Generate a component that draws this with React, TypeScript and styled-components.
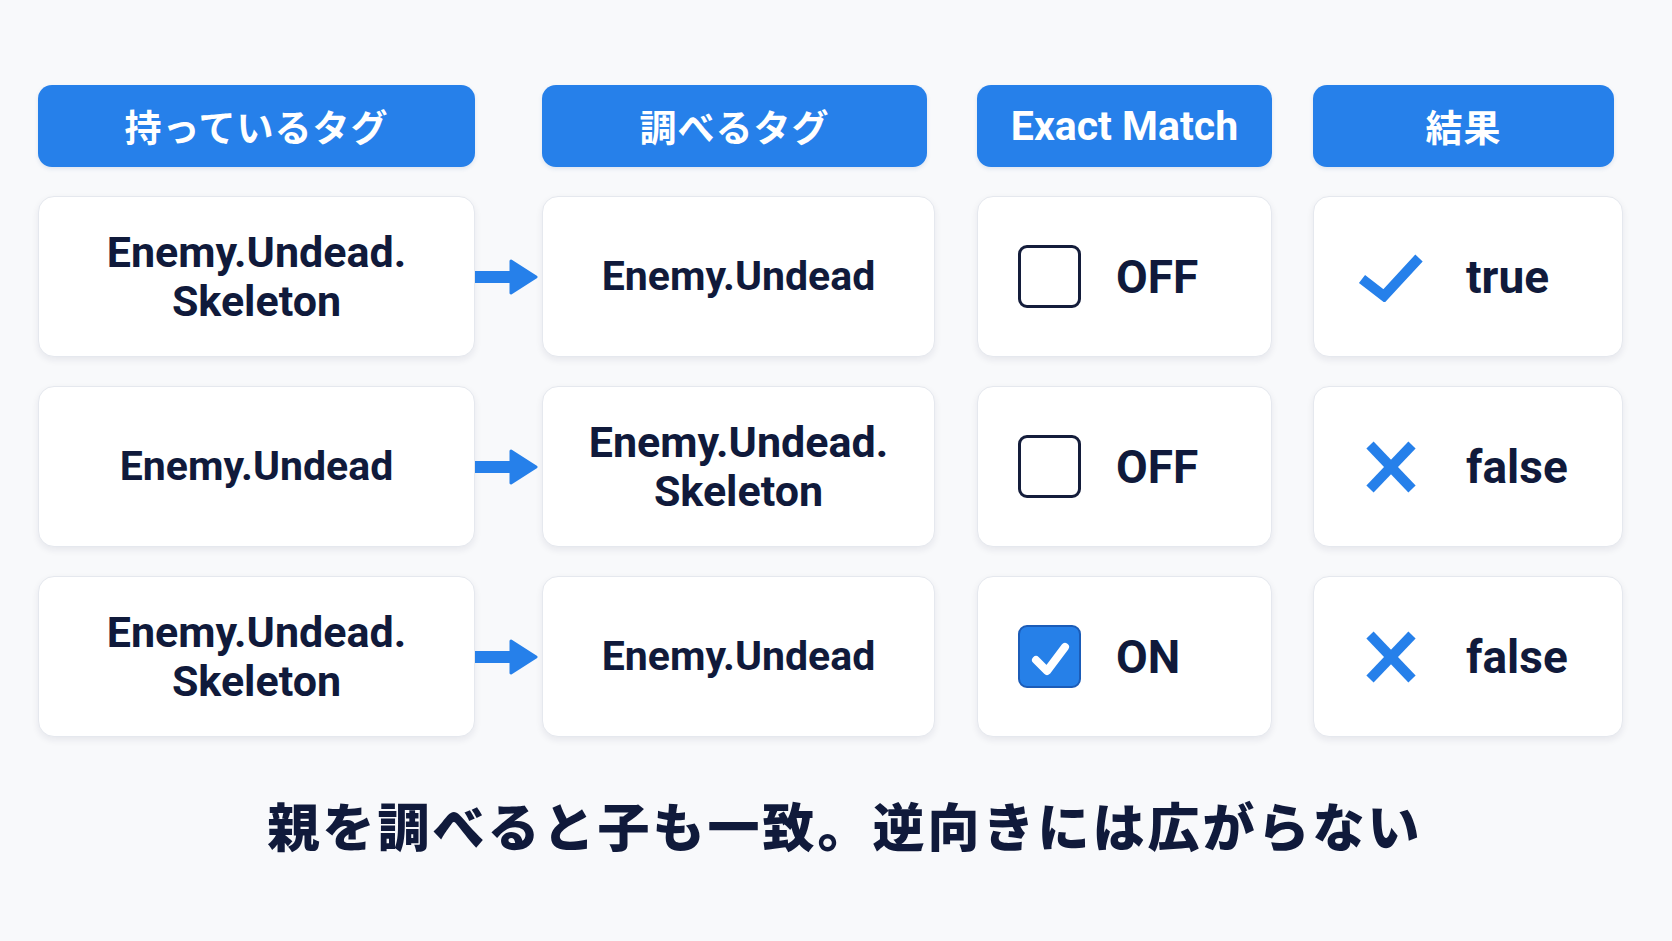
import React from "react";
import styled, { createGlobalStyle } from "styled-components";

const GlobalStyle = createGlobalStyle`
  html, body {
    margin: 0;
    padding: 0;
    background: #f8f9fb;
  }
  body {
    font-family: Roboto, "Noto Sans CJK JP", sans-serif;
    color: #101a3b;
  }
`;

const Page = styled.div`
  width: 1672px;
  height: 941px;
  box-sizing: border-box;
  padding: 85px 0 0 38px;
  display: flex;
  flex-direction: column;
`;

const Grid = styled.div`
  display: grid;
  grid-template-columns: 437px 67px 393px 42px 295px 41px 310px;
  grid-auto-rows: 161px;
  grid-template-rows: 82px;
  row-gap: 29px;
`;

const Header = styled.div<{ $col: number; $trim?: number }>`
  grid-column: ${(p) => p.$col};
  margin-right: ${(p) => p.$trim ?? 0}px;
  background: #2680ea;
  border-radius: 14px;
  box-shadow: 0 2px 4px rgba(30, 80, 160, 0.12);
  display: flex;
  align-items: center;
  justify-content: center;
  color: #ffffff;
  font-family: "Noto Sans CJK JP", sans-serif;
  font-weight: 700;
  font-size: 37px;
  letter-spacing: 1px;
`;

const HeaderLatin = styled.span`
  font-family: Roboto, sans-serif;
  font-size: 41px;
  letter-spacing: 0;
`;

const Card = styled.div<{ $col: number; $align?: "center" | "start"; $pad?: number }>`
  grid-column: ${(p) => p.$col};
  background: #ffffff;
  border: 1px solid #e5e8ee;
  border-radius: 16px;
  box-shadow: 0 3px 7px rgba(20, 30, 60, 0.08);
  box-sizing: border-box;
  display: flex;
  align-items: center;
  justify-content: ${(p) => (p.$align === "start" ? "flex-start" : "center")};
  padding-left: ${(p) => p.$pad ?? 0}px;
`;

const TagText = styled.div<{ $multi: boolean }>`
  font-family: Roboto, sans-serif;
  font-weight: 700;
  font-size: ${(p) => (p.$multi ? 43 : 41)}px;
  line-height: 49px;
  text-align: center;
  color: #101a3b;
`;

const Label = styled.span`
  font-family: Roboto, sans-serif;
  font-weight: 700;
  font-size: 46px;
  line-height: 1;
  color: #101a3b;
`;

const ArrowCell = styled.div`
  grid-column: 2;
  display: flex;
  align-items: center;
  justify-content: flex-start;
`;

const Box = styled.div<{ $checked?: boolean }>`
  width: 63px;
  height: 63px;
  box-sizing: border-box;
  border-radius: 9px;
  border: ${(p) => (p.$checked ? "2px solid #1b5cb8" : "3px solid #141d3b")};
  background: ${(p) => (p.$checked ? "#2680e8" : "#ffffff")};
  display: flex;
  align-items: center;
  justify-content: center;
  margin-right: 35px;
  flex: none;
`;

const IconSlot = styled.div`
  width: 66px;
  display: flex;
  align-items: center;
  justify-content: center;
  margin-right: 42px;
  flex: none;
`;

const Caption = styled.div`
  margin-top: 52px;
  margin-left: -38px;
  padding-left: 18px;
  text-align: center;
  font-family: "Noto Sans CJK JP", sans-serif;
  font-weight: 900;
  font-size: 52px;
  line-height: 72px;
  letter-spacing: 3px;
  color: #101a3b;
`;

const Arrow = () => (
  <svg width="63" height="36" viewBox="0 0 63 36">
    <rect x="0" y="12" width="38" height="12" fill="#2680ea" />
    <path
      d="M36 2 L61 18 L36 34 Z"
      fill="#2680ea"
      stroke="#2680ea"
      strokeWidth="3"
      strokeLinejoin="round"
    />
  </svg>
);

const BoxCheck = () => (
  <svg width="44" height="40" viewBox="0 0 44 40">
    <polyline
      points="8,23 19,34 37,10"
      fill="none"
      stroke="#ffffff"
      strokeWidth="8"
      strokeLinecap="round"
      strokeLinejoin="round"
    />
  </svg>
);

const TrueIcon = () => (
  <svg width="66" height="50" viewBox="0 0 66 50">
    <polyline
      points="4,27 26,44 61,6"
      fill="none"
      stroke="#2680ea"
      strokeWidth="10"
      strokeLinejoin="miter"
    />
  </svg>
);

const FalseIcon = () => (
  <svg width="52" height="54" viewBox="0 0 52 54">
    <line x1="5" y1="5" x2="47" y2="49" stroke="#2680ea" strokeWidth="10" />
    <line x1="47" y1="5" x2="5" y2="49" stroke="#2680ea" strokeWidth="10" />
  </svg>
);

type Row = {
  has: string[];
  query: string[];
  exact: boolean;
  result: boolean;
};

const rows: Row[] = [
  { has: ["Enemy.Undead.", "Skeleton"], query: ["Enemy.Undead"], exact: false, result: true },
  { has: ["Enemy.Undead"], query: ["Enemy.Undead.", "Skeleton"], exact: false, result: false },
  { has: ["Enemy.Undead.", "Skeleton"], query: ["Enemy.Undead"], exact: true, result: false },
];

const Lines = ({ lines }: { lines: string[] }) => (
  <TagText $multi={lines.length > 1}>
    {lines.map((l, i) => (
      <div key={i}>{l}</div>
    ))}
  </TagText>
);

export default function App() {
  return (
    <>
      <GlobalStyle />
      <Page>
        <Grid>
          <Header $col={1}>持っているタグ</Header>
          <Header $col={3} $trim={8}>調べるタグ</Header>
          <Header $col={5}>
            <HeaderLatin>Exact Match</HeaderLatin>
          </Header>
          <Header $col={7} $trim={9}>結果</Header>
          {rows.map((r, i) => (
            <React.Fragment key={i}>
              <Card $col={1}>
                <Lines lines={r.has} />
              </Card>
              <ArrowCell>
                <Arrow />
              </ArrowCell>
              <Card $col={3}>
                <Lines lines={r.query} />
              </Card>
              <Card $col={5} $align="start" $pad={40}>
                <Box $checked={r.exact}>{r.exact && <BoxCheck />}</Box>
                <Label>{r.exact ? "ON" : "OFF"}</Label>
              </Card>
              <Card $col={7} $align="start" $pad={44}>
                <IconSlot>{r.result ? <TrueIcon /> : <FalseIcon />}</IconSlot>
                <Label>{r.result ? "true" : "false"}</Label>
              </Card>
            </React.Fragment>
          ))}
        </Grid>
        <Caption>親を調べると子も一致。逆向きには広がらない</Caption>
      </Page>
    </>
  );
}
